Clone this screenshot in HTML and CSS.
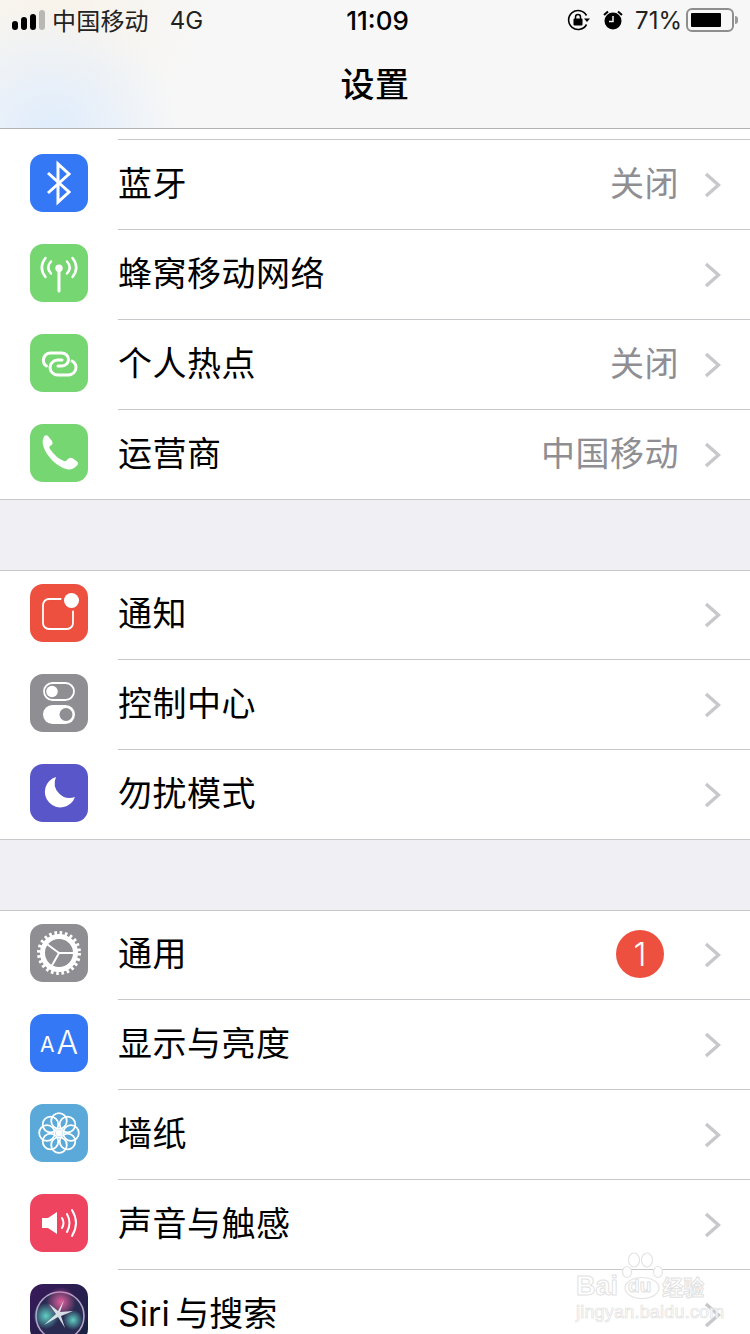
FILE: index.html
```html
<!DOCTYPE html>
<html lang="zh-CN">

<head>
    <meta charset="UTF-8">
    <title>设置</title>
    <link rel="stylesheet" href="styles.css">
</head>

<body>
    <header class="header">
        <div class="status">
            <div class="status-left">
                <div class="signal"><span class="bar1"></span><span class="bar2"></span><span class="bar3"></span><span class="bar4"></span></div>
                <span class="carrier">中国移动</span>
                <span class="net">4G</span>
            </div>
            <div class="time">11:09</div>
            <div class="status-right">
                <svg class="lock-icon" width="24" height="22" viewBox="0 0 24 22">
                    <path d="M19.500 6.500A9.500 9.500 0 1 0 19.500 15.500" fill="none" stroke="#000" stroke-width="1.600"/>
                    <path d="M17 9.500h6l-3 3.500z" fill="#000"/>
                    <rect x="6.500" y="9.500" width="9" height="7" rx="1" fill="#000"/>
                    <path d="M8.500 10V8a2.500 2.500 0 0 1 5 0v2" fill="none" stroke="#000" stroke-width="1.500"/>
                </svg>
                <svg class="alarm-icon" width="20" height="20" viewBox="0 0 20 20">
                    <circle cx="10" cy="11" r="8.500" fill="#000"/>
                    <path d="M10 6v5.500H6" fill="none" stroke="#f7f7f7" stroke-width="1.500"/>
                    <path d="M1 5L5 1.500M19 5L15 1.500" stroke="#000" stroke-width="2"/>
                </svg>
                <span class="percent">71%</span>
                <div class="battery"><div class="battery-fill"></div></div>
                <div class="battery-cap"></div>
            </div>
        </div>
        <h1 class="title">设置</h1>
    </header>

    <main>
        <section class="group group-first">
            <div class="row">
                <div class="icon blue">
                    <svg width="58" height="58" viewBox="0 0 58 58"><path d="M18 19L39 38L28 48V10L39 20L18 39" fill="none" stroke="#fff" stroke-width="3"/></svg>
                </div>
                <div class="row-body"><span class="label">蓝牙</span><span class="value">关闭</span>
                    <svg class="chevron" width="17" height="26" viewBox="0 0 17 26"><path d="M2 2L14.500 13L2 24" fill="none" stroke="#c7c7cc" stroke-width="3.400"/></svg>
                </div>
            </div>
            <div class="row">
                <div class="icon green">
                    <svg width="58" height="58" viewBox="0 0 58 58">
                        <g fill="none" stroke="#fff" stroke-width="2.500" stroke-linecap="round">
                            <path d="M21 17.500Q15.500 23.500 21 29.500M37 17.500Q42.500 23.500 37 29.500"/>
                            <path d="M15.500 14Q8 23.500 15.500 33M42.500 14Q50 23.500 42.500 33"/>
                            <path d="M29 24V47" stroke-width="3"/>
                        </g>
                        <circle cx="29" cy="24.300" r="3.700" fill="#fff"/>
                    </svg>
                </div>
                <div class="row-body"><span class="label">蜂窝移动网络</span>
                    <svg class="chevron" width="17" height="26" viewBox="0 0 17 26"><path d="M2 2L14.500 13L2 24" fill="none" stroke="#c7c7cc" stroke-width="3.400"/></svg>
                </div>
            </div>
            <div class="row">
                <div class="icon green">
                    <svg width="58" height="58" viewBox="0 0 58 58">
                        <g fill="none" stroke="#fff" stroke-width="3" stroke-linecap="round">
                            <path d="M16.500 32C14 30.500 13 28 13.500 25C14.500 21 17 19 20.500 19H31.500C35.500 19 38.500 22 38.500 25.500C38.500 29 35.500 32 32 32H28"/>
                            <path d="M42 27C44.500 28.500 46 30.500 46 33.500C46 37.500 42.500 41 38.500 41H27.500C23.500 41 20 37.500 20 33.500C20 29.500 23.500 26 27.500 26H32"/>
                        </g>
                    </svg>
                </div>
                <div class="row-body"><span class="label">个人热点</span><span class="value">关闭</span>
                    <svg class="chevron" width="17" height="26" viewBox="0 0 17 26"><path d="M2 2L14.500 13L2 24" fill="none" stroke="#c7c7cc" stroke-width="3.400"/></svg>
                </div>
            </div>
            <div class="row">
                <div class="icon green">
                    <svg width="58" height="58" viewBox="0 0 58 58"><path d="M14 12.500Q16 10.500 18 12L22 17Q23.500 19.500 21.500 21L19.500 22.500Q19 23.500 20 25Q26 34 34 37Q35.500 37.500 36.500 36.500L38.500 34.500Q40.500 33 43 34.500L47 37.500Q49 39.500 47 41.500Q43 46 38 45.500Q26 43 17 30Q10 19 14 12.500Z" fill="#fff"/></svg>
                </div>
                <div class="row-body"><span class="label">运营商</span><span class="value">中国移动</span>
                    <svg class="chevron" width="17" height="26" viewBox="0 0 17 26"><path d="M2 2L14.500 13L2 24" fill="none" stroke="#c7c7cc" stroke-width="3.400"/></svg>
                </div>
            </div>
        </section>

        <section class="group">
            <div class="row">
                <div class="icon red">
                    <svg width="58" height="58" viewBox="0 0 58 58">
                        <rect x="13" y="15" width="30" height="30" rx="6" fill="none" stroke="#fff" stroke-width="1.800"/>
                        <circle cx="41.500" cy="16.500" r="10.500" fill="#ee5040"/>
                        <circle cx="41.500" cy="16.500" r="7.500" fill="#fff"/>
                    </svg>
                </div>
                <div class="row-body"><span class="label">通知</span>
                    <svg class="chevron" width="17" height="26" viewBox="0 0 17 26"><path d="M2 2L14.500 13L2 24" fill="none" stroke="#c7c7cc" stroke-width="3.400"/></svg>
                </div>
            </div>
            <div class="row">
                <div class="icon gray">
                    <svg width="58" height="58" viewBox="0 0 58 58">
                        <rect x="14" y="9" width="30" height="17" rx="8.500" fill="none" stroke="#fff" stroke-width="1.800"/>
                        <circle cx="22" cy="17.500" r="5.800" fill="#fff"/>
                        <rect x="13" y="31" width="32" height="19" rx="9.500" fill="#fff"/>
                        <circle cx="36" cy="40.500" r="6.500" fill="#8e8e93"/>
                    </svg>
                </div>
                <div class="row-body"><span class="label">控制中心</span>
                    <svg class="chevron" width="17" height="26" viewBox="0 0 17 26"><path d="M2 2L14.500 13L2 24" fill="none" stroke="#c7c7cc" stroke-width="3.400"/></svg>
                </div>
            </div>
            <div class="row">
                <div class="icon indigo">
                    <svg width="58" height="58" viewBox="0 0 58 58"><path d="M26 13A15.500 15.500 0 1 0 45 33A15 15 0 0 1 26 13Z" fill="#fff"/></svg>
                </div>
                <div class="row-body"><span class="label">勿扰模式</span>
                    <svg class="chevron" width="17" height="26" viewBox="0 0 17 26"><path d="M2 2L14.500 13L2 24" fill="none" stroke="#c7c7cc" stroke-width="3.400"/></svg>
                </div>
            </div>
        </section>

        <section class="group">
            <div class="row">
                <div class="icon gray">
                    <svg width="58" height="58" viewBox="0 0 58 58">
                        <circle cx="29" cy="29" r="20" fill="none" stroke="#fff" stroke-width="4" stroke-dasharray="2.600 2.636"/>
                        <circle cx="29" cy="29" r="16.500" fill="none" stroke="#fff" stroke-width="5"/>
                        <path d="M29 29H44M29 29L17.500 20.500M29 29L22 41.500" stroke="#fff" stroke-width="2"/>
                    </svg>
                </div>
                <div class="row-body"><span class="label">通用</span><span class="badge">1</span>
                    <svg class="chevron" width="17" height="26" viewBox="0 0 17 26"><path d="M2 2L14.500 13L2 24" fill="none" stroke="#c7c7cc" stroke-width="3.400"/></svg>
                </div>
            </div>
            <div class="row">
                <div class="icon blue">
                    <svg width="58" height="58" viewBox="0 0 58 58">
                        <text class="aa-small" x="10" y="38">A</text>
                        <text class="aa-big" x="26.500" y="40">A</text>
                    </svg>
                </div>
                <div class="row-body"><span class="label">显示与亮度</span>
                    <svg class="chevron" width="17" height="26" viewBox="0 0 17 26"><path d="M2 2L14.500 13L2 24" fill="none" stroke="#c7c7cc" stroke-width="3.400"/></svg>
                </div>
            </div>
            <div class="row">
                <div class="icon sky">
                    <svg width="58" height="58" viewBox="0 0 58 58">
                        <g fill="none" stroke="#fff" stroke-width="1.800">
                            <circle cx="29" cy="17" r="7.800"/>
                            <circle cx="37.500" cy="20.500" r="7.800"/>
                            <circle cx="41" cy="29" r="7.800"/>
                            <circle cx="37.500" cy="37.500" r="7.800"/>
                            <circle cx="29" cy="41" r="7.800"/>
                            <circle cx="20.500" cy="37.500" r="7.800"/>
                            <circle cx="17" cy="29" r="7.800"/>
                            <circle cx="20.500" cy="20.500" r="7.800"/>
                        </g>
                        <circle cx="29" cy="29" r="3.200" fill="#fff"/>
                    </svg>
                </div>
                <div class="row-body"><span class="label">墙纸</span>
                    <svg class="chevron" width="17" height="26" viewBox="0 0 17 26"><path d="M2 2L14.500 13L2 24" fill="none" stroke="#c7c7cc" stroke-width="3.400"/></svg>
                </div>
            </div>
            <div class="row">
                <div class="icon pink">
                    <svg width="58" height="58" viewBox="0 0 58 58">
                        <path d="M12 24H18L27 18V40L18 34H12Z" fill="#fff"/>
                        <g fill="none" stroke="#fff" stroke-width="2" stroke-linecap="round">
                            <path d="M32 24Q35 29 32 34"/>
                            <path d="M37 20Q42 29 37 38"/>
                            <path d="M42 16Q50 29 42 42"/>
                        </g>
                    </svg>
                </div>
                <div class="row-body"><span class="label">声音与触感</span>
                    <svg class="chevron" width="17" height="26" viewBox="0 0 17 26"><path d="M2 2L14.500 13L2 24" fill="none" stroke="#c7c7cc" stroke-width="3.400"/></svg>
                </div>
            </div>
            <div class="row">
                <div class="icon siri">
                    <svg width="58" height="58" viewBox="0 0 58 58">
                        <defs>
                            <radialGradient id="siriPink">
                                <stop offset="0" stop-color="#e0609c"/>
                                <stop offset="1" stop-color="#e0609c" stop-opacity="0"/>
                            </radialGradient>
                            <radialGradient id="siriTeal">
                                <stop offset="0" stop-color="#5fd0c4"/>
                                <stop offset="1" stop-color="#5fd0c4" stop-opacity="0"/>
                            </radialGradient>
                        </defs>
                        <circle cx="30" cy="32" r="24" fill="#2a2b52" stroke="#b7a3c9" stroke-width="1.600"/>
                        <circle cx="31" cy="18" r="15" fill="url(#siriPink)"/>
                        <circle cx="16" cy="32" r="13" fill="url(#siriTeal)"/>
                        <circle cx="43" cy="36" r="10" fill="url(#siriTeal)"/>
                        <path d="M34 16L30 28L43 27L31 32L35 44L28 33L14 41L26 30L19 20L28 27Z" fill="#eefafa" opacity="0.850"/>
                    </svg>
                </div>
                <div class="row-body"><span class="label label-siri">Siri 与搜索</span>
                    <svg class="chevron" width="17" height="26" viewBox="0 0 17 26"><path d="M2 2L14.500 13L2 24" fill="none" stroke="#c7c7cc" stroke-width="3.400"/></svg>
                </div>
            </div>
        </section>
    </main>

    <div class="watermark">
        <svg class="paw" width="42" height="50" viewBox="0 0 42 50">
            <g fill="#fff" stroke="#e4e4e4" stroke-width="1.200">
                <ellipse cx="5" cy="20" rx="4.500" ry="5.500"/>
                <ellipse cx="12" cy="8" rx="5.500" ry="7"/>
                <ellipse cx="25" cy="8" rx="5.500" ry="7"/>
                <ellipse cx="36" cy="20" rx="4.500" ry="5.500"/>
                <ellipse cx="20" cy="36" rx="17" ry="10.500"/>
            </g>
        </svg>
        <div class="wm-line"><span>Bai</span><span class="wm-du">du</span><span class="wm-cn">经验</span></div>
        <div class="wm-url">jingyan.baidu.com</div>
    </div>
</body>

</html>
```

FILE: styles.css
```css
html,
body {
    margin: 0;
    height: 1334px;
    overflow: hidden;
}

body {
    position: relative;
    background-color: #efeff4;
    color: #000;
    font-family: "Inter", "Noto Sans CJK SC", sans-serif;
}

.header {
    height: 128px;
    border-bottom: 1px solid #b2b2b2;
    background-color: #f7f7f7;
    background-image: radial-gradient(circle at 50px 135px, #dfecfc 0, rgba(247, 247, 247, 0) 130px),
        radial-gradient(circle at 60px -10px, #f8f3ea 0, rgba(247, 247, 247, 0) 150px);
}

.status {
    display: grid;
    grid-template-columns: 1fr auto 1fr;
    align-items: center;
    height: 40px;
    padding: 0 12px;
    font-size: 24px;
}

.status-left,
.status-right {
    display: flex;
    align-items: center;
}

.status-right {
    justify-content: flex-end;
}

.signal {
    display: flex;
    align-items: flex-end;
    gap: 3px;
    height: 20px;
}

.signal span {
    width: 6px;
    border-radius: 3px;
    background-color: #000;
}

.signal .bar1 {
    height: 9px;
}

.signal .bar2 {
    height: 13px;
}

.signal .bar3 {
    height: 16px;
}

.signal .bar4 {
    height: 20px;
    background-color: #b8b8b4;
}

.carrier {
    margin-top: -2px;
    margin-left: 7px;
    letter-spacing: 0.2px;
    color: #222;
}

.net {
    margin-left: 21px;
    color: #222;
}

.time {
    margin-left: 5px;
    font-size: 26px;
    font-weight: 500;
}

.lock-icon {
    margin-right: 12px;
}

.alarm-icon {
    margin-right: 12px;
}

.percent {
    margin-right: 4px;
    color: #222;
}

.battery {
    box-sizing: border-box;
    width: 48px;
    height: 24px;
    padding: 3px;
    border: 2px solid #8e8e8e;
    border-radius: 6px;
}

.battery-fill {
    width: 30px;
    height: 100%;
    background-color: #000;
    border-radius: 1px;
}

.battery-cap {
    width: 3px;
    height: 8px;
    margin-left: 1px;
    border-radius: 0 3px 3px 0;
    background-color: #9a9a9a;
}

.title {
    margin: 0;
    padding-top: 20px;
    font-size: 34px;
    font-weight: 500;
    letter-spacing: 0.5px;
    line-height: 50px;
    text-align: center;
}

.group {
    margin-top: 70px;
    background-color: #fff;
    box-shadow: inset 0 1px 0 #c8c7cc, inset 0 -1px 0 #c8c7cc;
}

.group-first {
    margin-top: 0;
    padding-top: 11px;
    box-shadow: inset 0 -1px 0 #c8c7cc;
}

.group-first::before {
    content: "";
    display: block;
    height: 1px;
    margin: -1px 0 0 118px;
    background-color: #c8c7cc;
}

.row {
    display: flex;
    align-items: flex-start;
    height: 90px;
    padding-left: 30px;
}

.icon {
    flex: none;
    width: 58px;
    height: 58px;
    margin-top: 14px;
    border-radius: 13px;
    overflow: hidden;
}

.icon svg {
    display: block;
}

.blue {
    background-color: #3478f6;
}

.green {
    background-color: #76d672;
}

.red {
    background-color: #ee5040;
}

.gray {
    background-color: #8e8e93;
}

.indigo {
    background-color: #5856c8;
}

.sky {
    background-color: #5aa9d8;
}

.pink {
    background-color: #ee4460;
}

.siri {
    background: linear-gradient(135deg, #3a1a5c, #15233f);
}

.row-body {
    flex: 1;
    display: flex;
    align-items: center;
    box-sizing: border-box;
    height: 90px;
    margin-left: 30px;
    padding-right: 29px;
    padding-bottom: 2px;
    border-bottom: 1px solid #c8c7cc;
}

.row:last-child .row-body {
    border-bottom: none;
}

.label {
    flex: 1;
    font-size: 34px;
    letter-spacing: 0.5px;
    line-height: 1;
}

.label-siri {
    letter-spacing: 0;
    word-spacing: -4px;
}

.value {
    margin-right: 25px;
    font-size: 34px;
    letter-spacing: 0.5px;
    line-height: 1;
    color: #8e8e93;
}

.chevron {
    flex: none;
    margin-top: 2px;
}

.badge {
    width: 48px;
    height: 48px;
    margin-right: 40px;
    border-radius: 50%;
    background-color: #ee5040;
    color: #fff;
    font-size: 33px;
    font-weight: 300;
    line-height: 48px;
    text-align: center;
}

.aa-small {
    font-size: 21px;
    fill: #fff;
}

.aa-big {
    font-size: 32px;
    font-weight: 300;
    fill: #fff;
}

.watermark {
    position: absolute;
    left: 576px;
    top: 1253px;
    width: 134px;
    pointer-events: none;
}

.paw {
    position: absolute;
    left: 46px;
    top: -1px;
}

.wm-line {
    position: relative;
    display: flex;
    align-items: center;
    padding-top: 21px;
    color: #fff;
    font-family: "Liberation Sans", sans-serif;
    font-size: 27px;
    font-weight: 700;
    line-height: 24px;
    -webkit-text-stroke: 1px #e2e2e2;
}

.wm-du {
    margin-left: 10px;
    font-size: 19px;
}

.wm-cn {
    margin-left: 11px;
    font-family: "Noto Sans CJK SC", sans-serif;
    font-size: 21px;
}

.wm-url {
    margin-top: 4px;
    color: #fff;
    font-family: "Liberation Sans", sans-serif;
    font-size: 18px;
    letter-spacing: 0.2px;
    line-height: 20px;
    white-space: nowrap;
    -webkit-text-stroke: 0.700px #e2e2e2;
}
```
